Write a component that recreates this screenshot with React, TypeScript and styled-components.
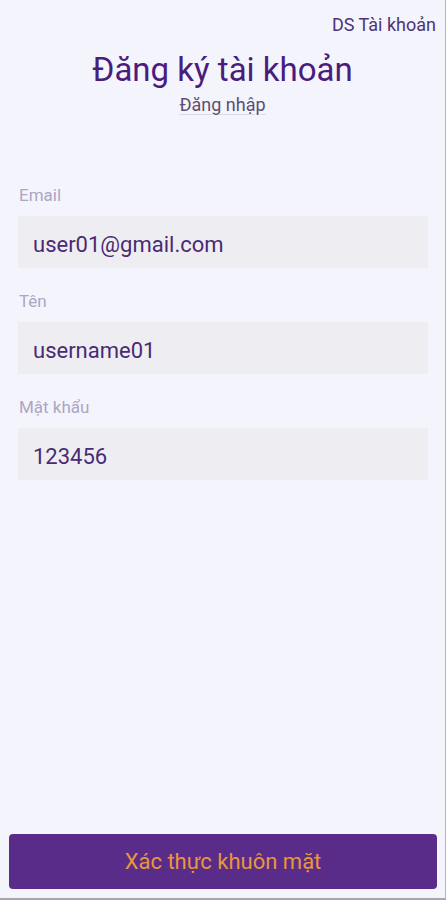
import React from "react";
import styled, { createGlobalStyle } from "styled-components";

const GlobalStyle = createGlobalStyle`
  html, body {
    margin: 0;
    padding: 0;
    background: #f4f4fc;
  }
  body {
    font-family: Roboto, "Noto Sans", sans-serif;
  }
  * {
    box-sizing: border-box;
  }
`;

// outer frame: the screenshot has a thin grey edge on right and bottom
const Screen = styled.div`
  height: 900px;
  display: flex;
  flex-direction: column;
  background: #f4f4fc;
  border-right: 1px solid #b4b4b8;
  border-bottom: 2px solid #a8a8ac;
`;

const TopBar = styled.div`
  display: flex;
  justify-content: flex-end;
  padding: 14px 9px 0 0;
`;

const TopLink = styled.span`
  font-size: 18px;
  line-height: 21px;
  color: #4d3478;
`;

const Heading = styled.header`
  display: flex;
  flex-direction: column;
  align-items: center;
  padding-top: 15px;
`;

const Title = styled.h1`
  margin: 0;
  font-size: 33px;
  font-weight: 400;
  line-height: 40px;
  color: #4a1d7d;
`;

const SubLink = styled.a`
  margin-top: 4px;
  font-size: 18px;
  line-height: 22px;
  color: #5b4f72;
  text-decoration: underline;
  text-decoration-color: #dcd9e4;
  text-underline-offset: 3px;
`;

const Form = styled.form`
  display: flex;
  flex-direction: column;
  padding: 69px 18px 0 18px;
  gap: 23px;
`;

const Field = styled.label`
  display: flex;
  flex-direction: column;
  gap: 11px;
`;

const FieldLabel = styled.span`
  padding-left: 1px;
  font-size: 17px;
  line-height: 20px;
  color: #aca6c4;
`;

const Input = styled.input`
  width: 410px;
  height: 52px;
  border: none;
  outline: none;
  background: #eeeef2;
  padding: 4px 15px 0 15px;
  font-family: Roboto, "Noto Sans", sans-serif;
  font-size: 22px;
  color: #4a2a72;
`;

const Spacer = styled.div`
  flex: 1;
`;

const Footer = styled.div`
  padding: 0 8px 9px 9px;
`;

const MainButton = styled.button`
  width: 100%;
  height: 55px;
  border: none;
  border-radius: 4px;
  background: #5a2c8a;
  color: #e8963c;
  font-family: Roboto, "Noto Sans", sans-serif;
  font-size: 22px;
  cursor: pointer;
`;

const fields = [
  { label: "Email", value: "user01@gmail.com" },
  { label: "Tên", value: "username01" },
  { label: "Mật khẩu", value: "123456" },
];

export default function App() {
  return (
    <Screen>
      <GlobalStyle />
      <TopBar>
        <TopLink>DS Tài khoản</TopLink>
      </TopBar>
      <Heading>
        <Title>Đăng ký tài khoản</Title>
        <SubLink>Đăng nhập</SubLink>
      </Heading>
      <Form onSubmit={(e) => e.preventDefault()}>
        {fields.map((f) => (
          <Field key={f.label}>
            <FieldLabel>{f.label}</FieldLabel>
            <Input defaultValue={f.value} />
          </Field>
        ))}
      </Form>
      <Spacer />
      <Footer>
        <MainButton>Xác thực khuôn mặt</MainButton>
      </Footer>
    </Screen>
  );
}
